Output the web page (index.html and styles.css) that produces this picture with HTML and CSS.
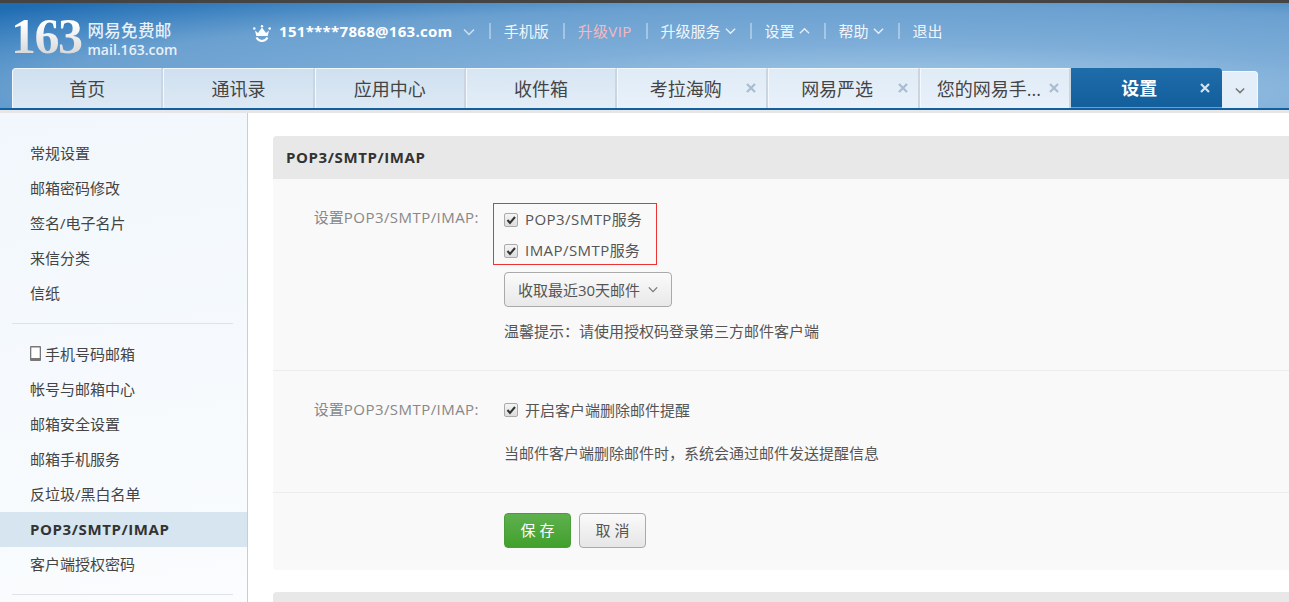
FILE: index.html
```html
<!DOCTYPE html>
<html lang="zh">
<head>
<meta charset="utf-8">
<title>网易免费邮箱 - 设置</title>
<link rel="stylesheet" href="styles.css">
</head>
<body>
<header class="top">
  <div class="topbar">
    <div class="logo">
      <span class="logo-num">163</span>
      <span class="logo-text"><span class="logo-cn">网易免费邮</span><span class="logo-en">mail.163.com</span></span>
    </div>
    <svg class="crown" viewBox="0 0 18 17" width="18" height="17"><path d="M2 5.500l3 2.500L9 2.500l4 5.500 3-2.500-1.300 5.500H3.300z" fill="#fff"/><circle cx="1.300" cy="3.500" r="1.200" fill="#fff"/><circle cx="16.700" cy="3.500" r="1.200" fill="#fff"/><circle cx="9" cy="1.200" r="1.200" fill="#fff"/><path d="M3.500 12.500c2.500 4.500 8.500 4.500 11 0" fill="none" stroke="#fff" stroke-width="2"/></svg>
    <span class="account">151****7868@163.com</span>
    <svg class="chev acc-chev" viewBox="0 0 12 8" width="12" height="8"><path d="M1 1.500l5 5 5-5" fill="none" stroke="#cfe0f0" stroke-width="1.500"/></svg>
    <nav class="links">
      <span class="sep"></span><a>手机版</a>
      <span class="sep"></span><a class="vip">升级VIP</a>
      <span class="sep"></span><a>升级服务<svg class="chev" viewBox="0 0 12 8" width="11" height="8"><path d="M1 1.500l5 5 5-5" fill="none" stroke="#e4eef8" stroke-width="1.500"/></svg></a>
      <span class="sep"></span><a>设置<svg class="chev" viewBox="0 0 12 8" width="11" height="8"><path d="M1 6.500l5-5 5 5" fill="none" stroke="#e4eef8" stroke-width="1.500"/></svg></a>
      <span class="sep"></span><a>帮助<svg class="chev" viewBox="0 0 12 8" width="11" height="8"><path d="M1 1.500l5 5 5-5" fill="none" stroke="#e4eef8" stroke-width="1.500"/></svg></a>
      <span class="sep"></span><a>退出</a>
    </nav>
  </div>
  <div class="tabs">
    <div class="tab plain">首页</div>
    <div class="tab plain">通讯录</div>
    <div class="tab plain">应用中心</div>
    <div class="tab plain">收件箱</div>
    <div class="tab closable">考拉海购<svg class="x" viewBox="0 0 10 10" width="10" height="10"><path d="M1 1l8 8M9 1l-8 8" stroke="#a9bccf" stroke-width="2.200"/></svg></div>
    <div class="tab closable">网易严选<svg class="x" viewBox="0 0 10 10" width="10" height="10"><path d="M1 1l8 8M9 1l-8 8" stroke="#a9bccf" stroke-width="2.200"/></svg></div>
    <div class="tab closable long">您的网易手...<svg class="x" viewBox="0 0 10 10" width="10" height="10"><path d="M1 1l8 8M9 1l-8 8" stroke="#a9bccf" stroke-width="2.200"/></svg></div>
    <div class="tab closable active">设置<svg class="x" viewBox="0 0 10 10" width="10" height="10"><path d="M1 1l8 8M9 1l-8 8" stroke="#d5e3ef" stroke-width="2.200"/></svg></div>
    <div class="tab more"><svg viewBox="0 0 12 8" width="10" height="7"><path d="M1 1.500l5 5 5-5" fill="none" stroke="#777" stroke-width="1.800"/></svg></div>
  </div>
</header>
<div class="body">
  <aside class="side">
    <ul class="menu">
      <li>常规设置</li>
      <li>邮箱密码修改</li>
      <li>签名/电子名片</li>
      <li>来信分类</li>
      <li>信纸</li>
    </ul>
    <ul class="menu second">
      <li><svg class="phone" viewBox="0 0 11 15" width="11" height="15"><rect width="11" height="15" rx="1" fill="#777"/><rect x="1.300" y="1.500" width="8.400" height="10.500" fill="#fff"/></svg>手机号码邮箱</li>
      <li>帐号与邮箱中心</li>
      <li>邮箱安全设置</li>
      <li>邮箱手机服务</li>
      <li>反垃圾/黑白名单</li>
      <li class="current">POP3/SMTP/IMAP</li>
      <li>客户端授权密码</li>
    </ul>
  </aside>
  <main class="main">
    <section class="panel">
      <h2 class="panel-head">POP3/SMTP/IMAP</h2>
      <div class="row first">
        <div class="label">设置<span class="lat">POP3/SMTP/IMAP:</span></div>
        <div class="field">
          <div class="redbox">
            <label class="check"><span class="box"><svg viewBox="0 0 10 10" width="10" height="10"><path d="M1.500 5l2.500 3 5-6" fill="none" stroke="#333" stroke-width="2"/></svg></span><span class="lat">POP3/SMTP</span>服务</label>
            <label class="check"><span class="box"><svg viewBox="0 0 10 10" width="10" height="10"><path d="M1.500 5l2.500 3 5-6" fill="none" stroke="#333" stroke-width="2"/></svg></span><span class="lat">IMAP/SMTP</span>服务</label>
          </div>
          <button class="select">收取最近30天邮件<svg viewBox="0 0 12 8" width="10" height="7"><path d="M1 1.500l5 5 5-5" fill="none" stroke="#777" stroke-width="1.500"/></svg></button>
          <p class="hint">温馨提示：请使用授权码登录第三方邮件客户端</p>
        </div>
      </div>
      <div class="row second">
        <div class="label">设置<span class="lat">POP3/SMTP/IMAP:</span></div>
        <div class="field">
          <label class="check single"><span class="box"><svg viewBox="0 0 10 10" width="10" height="10"><path d="M1.500 5l2.500 3 5-6" fill="none" stroke="#333" stroke-width="2"/></svg></span>开启客户端删除邮件提醒</label>
          <p class="hint">当邮件客户端删除邮件时，系统会通过邮件发送提醒信息</p>
        </div>
      </div>
      <div class="actions">
        <button class="btn save">保 存</button>
        <button class="btn cancel">取 消</button>
      </div>
    </section>
    <section class="panel next"></section>
  </main>
</div>
</body>
</html>
```
FILE: styles.css
```css
* { box-sizing: border-box; }
html, body { margin: 0; height: 100%; overflow: hidden; }
body {
  font-family: "Open Sans", "Noto Sans CJK SC", sans-serif;
  font-size: 15px;
  color: #444;
  background: #fff;
}
.lat { letter-spacing: .45px; }
.top {
  height: 113px;
  border-top: 3px solid #444;
  border-bottom: 3px solid #e6e6e6;
  background: radial-gradient(1232px 123px at 900px 90px, #aed0ea 0%, #7dadd8 40%, #6aa0d0 71%, #3a80bf 89%, #1f6cb2 100%);
}
.topbar { height: 65px; display: flex; align-items: flex-start; padding-left: 11px; }
.logo { display: flex; width: 242px; padding-top: 8px; }
.logo-num {
  font-family: "Liberation Serif", serif;
  font-weight: 700;
  font-size: 50px;
  line-height: 50px;
  letter-spacing: -1.500px;
  background: linear-gradient(180deg, #fff 25%, #d9d9d9 85%);
  -webkit-background-clip: text;
  background-clip: text;
  color: transparent;
  margin-right: 6px;
}
.logo-text { display: flex; flex-direction: column; padding-top: 9px; color: #e8f0f8; }
.logo-cn { font-size: 16.500px; line-height: 21px; letter-spacing: .3px; font-weight: 500; }
.logo-en { font-size: 14px; line-height: 19px; font-weight: 600; margin-top: -1px; }
.crown { margin-top: 22px; }
.account { margin-left: 8px; margin-top: 17px; font-size: 15px; font-weight: 700; color: #fff; line-height: 23px; letter-spacing: .3px; }
.acc-chev { margin-left: 10px; margin-top: 25px; }
.links { display: flex; align-items: center; margin-top: 16px; height: 23px; color: #f0f6fc; }
.links a { display: flex; align-items: center; white-space: nowrap; font-size: 15px; gap: 4px; }
.links .vip { color: #f6b9c0; letter-spacing: .35px; }
.sep { width: 2px; height: 16px; background: rgba(255,255,255,.35); margin: 0 13px 0 14px; }
.tabs { display: flex; height: 42px; padding-left: 12px; border-bottom: 2px solid #12609f; align-items: flex-end; }
.tab {
  position: relative;
  width: 151.300px;
  height: 40px;
  display: flex;
  align-items: center;
  justify-content: center;
  padding-bottom: 2px;
  font-size: 18px;
  color: #444;
  border-top: 1px solid #f2f7fc;
  border-right: 2px solid #c9d6e2;
  border-left: 1px solid #f5f9fd;
  flex: none;
}
.tab.plain { background: linear-gradient(180deg, #cfe0f0, #dde9f4); }
.tab.plain:first-child { border-top-left-radius: 4px; }
.tab.plain:nth-child(4) { background: linear-gradient(180deg, #d7e6f3, #e3edf7); }
.tab.closable { padding-right: 13px; background: linear-gradient(180deg, #dfebf6, #e9f1fa); }
.tab.long { padding-right: 0; justify-content: flex-start; padding-left: 16px; }
.x { position: absolute; right: 10px; top: 14px; }
.tab.active {
  padding-right: 15px;
  background: linear-gradient(180deg, #1e6ca9, #125f9c);
  color: #fff;
  font-weight: 700;
  border: 0;
  border-top-right-radius: 4px;
  border-bottom: 1px solid #6e9fc7;
}
.tab.active .x { right: 12px; top: 15px; }
.tab.more { width: 36px; height: 37px; padding-bottom: 0; border: 0; border-top-right-radius: 4px; background: #e3eef8; border-right: 1px solid #f5f9fd; border-top: 1px solid #f5f9fd; }
.body { display: flex; height: 489px; }
.side {
  width: 248px;
  flex: none;
  border-right: 1px solid #c8ced4;
  background: linear-gradient(170deg, #f1f7fc, #fafcfe);
  padding: 23px 0 0;
}
.menu { list-style: none; margin: 0; padding: 0 0 12px; }
.menu li { height: 35px; padding: 0 0 2px 30px; font-size: 15px; color: #444; display: flex; align-items: center; }
.menu.second { position: relative; padding-top: 14px; }
.menu.second::before, .menu.second::after { content: ""; display: block; height: 1px; background: #dfe3e6; margin: 0 14px 0 12px; }
.menu.second::before { position: absolute; top: 0; left: 0; right: 0; }
.menu.second::after { margin-top: 12px; }
.menu .current { background: #d7e5f0; font-weight: 700; color: #333; letter-spacing: .6px; }
.phone { margin-right: 4px; }
.main { flex: 1; min-width: 0; padding: 23px 0 0 25px; }
.panel { background: #f9f9f9; border-radius: 4px 0 0 4px; margin-right: -2px; }
.panel-head {
  margin: 0;
  height: 43px;
  line-height: 42px;
  padding-left: 13px;
  background: #e8e8e8;
  font-size: 15px;
  font-weight: 700;
  letter-spacing: .6px;
  color: #333;
  border-radius: 4px 0 0 0;
}
.row { display: flex; border-bottom: 1px solid #ececec; }
.row.first { height: 192px; padding-top: 24px; }
.row.second { height: 122px; padding-top: 29px; }
.label { width: 206px; text-align: right; color: #888; line-height: 28px; margin-top: -5px; }
.row.first .label { margin-top: 0; }
.field { margin-left: 25px; display: flex; flex-direction: column; align-items: flex-start; }
.redbox { margin-left: -11px; width: 164px; height: 62px; border: 1px solid #ee3333; padding: 0 0 0 10px; }
.check { display: flex; align-items: center; height: 31px; padding-bottom: 2px; color: #555; }
.check .box {
  width: 14px; height: 14px; margin: 2px 7px 0 0;
  border: 1px solid #aaa; border-radius: 2px;
  background: linear-gradient(180deg, #f5f5f5, #ddd);
  display: flex; align-items: center; justify-content: center;
}
.select {
  margin-top: 7px;
  width: 168px; height: 35px;
  border: 1px solid #aaa; border-radius: 4px;
  background: linear-gradient(180deg, #fafafa, #e9e9e9);
  font: inherit; color: #555;
  display: flex; align-items: center; justify-content: center; gap: 8px;
}
.hint { margin: 14px 0 0; line-height: 20px; color: #555; }
.row.second .check.single { height: 20px; }
.row.second .hint { margin-top: 23px; }
.actions { height: 77px; display: flex; align-items: flex-start; padding: 20px 0 0 231px; gap: 8px; }
.btn { width: 67px; height: 35px; border-radius: 4px; font: inherit; cursor: pointer; padding: 0 0 2px; }
.save { background: linear-gradient(180deg, #5fb14e, #41a02c); border: 1px solid #4b9c3a; color: #fff; }
.cancel { background: linear-gradient(180deg, #fafafa, #e6e6e6); border: 1px solid #aaa; color: #555; }
.next { margin-top: 22px; height: 60px; background: #e8e8e8; }
```
